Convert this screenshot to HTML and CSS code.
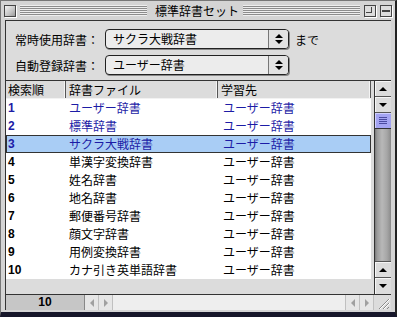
FILE: index.html
```html
<!DOCTYPE html>
<html lang="ja">
<head>
<meta charset="UTF-8">
<title>標準辞書セット</title>
<link rel="stylesheet" href="styles.css">
</head>
<body>
<div class="window">
    <div class="titlebar">
        <span class="closebox"></span>
        <span class="stripes stripes-left"></span>
        <span class="title">標準辞書セット</span>
        <span class="stripes stripes-right"></span>
        <span class="zoombox"><span></span></span>
        <span class="collapsebox"><span></span></span>
    </div>
    <div class="frame">
        <div class="content">
            <div class="settings">
                <div class="field">
                    <label>常時使用辞書：</label>
                    <div class="popup">
                        <span class="popup-value">サクラ大戦辞書</span>
                        <span class="popup-arrows"><i class="tri-up"></i><i class="tri-down"></i></span>
                    </div>
                    <span class="suffix">まで</span>
                </div>
                <div class="field">
                    <label>自動登録辞書：</label>
                    <div class="popup">
                        <span class="popup-value">ユーザー辞書</span>
                        <span class="popup-arrows"><i class="tri-up"></i><i class="tri-down"></i></span>
                    </div>
                </div>
            </div>
            <div class="listarea">
                <div class="list">
                    <div class="list-head">
                        <span>検索順</span>
                        <span>辞書ファイル</span>
                        <span>学習先</span>
                    </div>
                    <div class="rows">
                        <div class="row blue"><b>1</b><span>ユーザー辞書</span><span>ユーザー辞書</span></div>
                        <div class="row blue"><b>2</b><span>標準辞書</span><span>ユーザー辞書</span></div>
                        <div class="row blue selected"><b>3</b><span>サクラ大戦辞書</span><span>ユーザー辞書</span></div>
                        <div class="row"><b>4</b><span>単漢字変換辞書</span><span>ユーザー辞書</span></div>
                        <div class="row"><b>5</b><span>姓名辞書</span><span>ユーザー辞書</span></div>
                        <div class="row"><b>6</b><span>地名辞書</span><span>ユーザー辞書</span></div>
                        <div class="row"><b>7</b><span>郵便番号辞書</span><span>ユーザー辞書</span></div>
                        <div class="row"><b>8</b><span>顔文字辞書</span><span>ユーザー辞書</span></div>
                        <div class="row"><b>9</b><span>用例変換辞書</span><span>ユーザー辞書</span></div>
                        <div class="row"><b>10</b><span>カナ引き英単語辞書</span><span>ユーザー辞書</span></div>
                    </div>
                </div>
                <div class="vscroll">
                    <span class="arrow"><i class="tri-up"></i></span>
                    <span class="arrow"><i class="tri-down"></i></span>
                    <span class="thumb"><i></i></span>
                    <span class="track"></span>
                    <span class="arrow"><i class="tri-up"></i></span>
                    <span class="arrow last"><i class="tri-down"></i></span>
                </div>
            </div>
            <div class="hscroll">
                <span class="count">10</span>
                <span class="harrow"><i class="tri-left"></i></span>
                <span class="harrow"><i class="tri-right"></i></span>
                <span class="htrack"></span>
                <span class="harrow"><i class="tri-left"></i></span>
                <span class="harrow"><i class="tri-right"></i></span>
                <span class="growbox">
                    <svg width="16" height="15" viewBox="0 0 16 15">
                        <path d="M4 14 L14 4 M8 14 L14 8 M12 14 L14 12" stroke="#8a8a8a" stroke-width="1" fill="none"/>
                        <path d="M5 14 L15 4 M9 14 L15 8" stroke="#fff" stroke-width="1" fill="none"/>
                    </svg>
                </span>
            </div>
        </div>
    </div>
</div>
</body>
</html>
```

FILE: styles.css
```css
* {
    box-sizing: border-box;
    margin: 0;
    padding: 0;
}
body {
    width: 397px;
    height: 317px;
    overflow: hidden;
    background: #16162a;
    font-family: "Noto Sans CJK JP", sans-serif;
    font-size: 12px;
    color: #000;
}
.window {
    width: 397px;
    height: 317px;
    display: flex;
    flex-direction: column;
    background: #d4d4d4;
    border-top: 1px solid #777;
    border-left: 1px solid #777;
    border-right: 2px solid #222;
    border-bottom: 5px solid #16162a;
}

/* title bar */
.titlebar {
    height: 19px;
    display: flex;
    align-items: center;
    padding: 0 3px 0 3px;
}
.closebox, .zoombox, .collapsebox {
    width: 12px;
    height: 12px;
    border: 1px solid #444;
    background: linear-gradient(135deg, #f4f4f4 0%, #c4c4c4 60%, #999 100%);
    box-shadow: 1px 1px 0 #fff;
    flex: none;
}
.zoombox {
    margin-left: 4px;
    position: relative;
    background: #ddd;
}
.zoombox span {
    position: absolute;
    left: 1px;
    top: 1px;
    width: 6px;
    height: 6px;
    border-right: 1px solid #444;
    border-bottom: 1px solid #444;
}
.collapsebox {
    margin-left: 4px;
    position: relative;
    background: #ddd;
}
.collapsebox span {
    position: absolute;
    left: 1px;
    right: 1px;
    top: 4px;
    height: 2px;
    border-top: 1px solid #444;
    border-bottom: 1px solid #444;
}
.stripes {
    height: 11px;
    background: repeating-linear-gradient(to bottom, #eee 0, #eee 1px, #8c8c8c 1px, #8c8c8c 2px);
}
.stripes-left {
    flex: 1;
    margin: 0 4px 0 4px;
}
.stripes-right {
    width: 117px;
}
.title {
    padding: 0 4px;
    line-height: 19px;
    white-space: nowrap;
}

/* window body */
.frame {
    flex: 1;
    display: flex;
    padding: 0 4px 2px 4px;
}
.content {
    flex: 1;
    display: flex;
    flex-direction: column;
    background: #dcdcdc;
    border-top: 1px solid #333;
    border-left: 1px solid #333;
}
.settings {
    display: flex;
    flex-direction: column;
    gap: 6px;
    padding: 8px 0 5px 9px;
}
.field {
    display: flex;
    align-items: center;
    height: 20px;
}
.field label {
    width: 90px;
    white-space: nowrap;
}
.popup {
    width: 184px;
    height: 20px;
    display: flex;
    border: 1px solid #222;
    border-radius: 4px;
    background: #ececec;
    box-shadow: 1px 1px 0 #888;
}
.popup-value {
    flex: 1;
    padding-left: 7px;
    line-height: 18px;
}
.popup-arrows {
    width: 20px;
    border-left: 1px solid #777;
    border-radius: 0 3px 3px 0;
    background: #e2e2e2;
    display: flex;
    flex-direction: column;
    align-items: center;
    justify-content: center;
    gap: 2px;
}
.suffix {
    margin-left: 6px;
}

/* arrows */
.tri-up, .tri-down, .tri-left, .tri-right {
    display: block;
    width: 0;
    height: 0;
}
.tri-up {
    border-left: 4px solid transparent;
    border-right: 4px solid transparent;
    border-bottom: 4px solid #000;
}
.tri-down {
    border-left: 4px solid transparent;
    border-right: 4px solid transparent;
    border-top: 4px solid #000;
}
.tri-left {
    border-top: 4px solid transparent;
    border-bottom: 4px solid transparent;
    border-right: 4px solid #a0a0a0;
}
.tri-right {
    border-top: 4px solid transparent;
    border-bottom: 4px solid transparent;
    border-left: 4px solid #a0a0a0;
}

/* list */
.listarea {
    flex: 1;
    display: flex;
    border-top: 1px solid #333;
}
.list {
    flex: 1;
    padding-right: 3px;
    background: #dcdcdc;
}
.list-head, .row {
    display: grid;
    grid-template-columns: 60px 152px 1fr;
}
.list-head {
    height: 18px;
    border-bottom: 1px solid #f2f2f2;
    background: #dcdcdc;
}
.list-head span {
    line-height: 17px;
    padding-left: 2px;
    border-right: 1px solid #555;
    box-shadow: inset -1px 0 0 #f4f4f4;
}
.list-head span + span {
    padding-left: 3px;
}
.rows {
    background: #fff;
}
.row {
    height: 18px;
    line-height: 18px;
}
.row b {
    font-family: "Liberation Sans", Arial, sans-serif;
    font-size: 12px;
    padding-left: 2px;
}
.row span {
    padding-left: 3px;
}
.row span + span {
    padding-left: 5px;
}
.blue {
    color: #1c1ca6;
}
.selected {
    background: #a9cdf5;
    box-shadow: inset 0 0 0 1px #333;
}

/* vertical scroll bar */
.vscroll {
    width: 17px;
    display: flex;
    flex-direction: column;
    border-left: 1px solid #333;
}
.arrow {
    height: 16px;
    display: flex;
    align-items: center;
    justify-content: center;
    background: #dcdcdc;
    border-bottom: 1px solid #555;
    box-shadow: inset 1px 1px 0 #f6f6f6;
}
.arrow.last {
    border-bottom: none;
}
.thumb {
    height: 16px;
    display: flex;
    align-items: center;
    justify-content: center;
    background: #a4a4f2;
    border-bottom: 1px solid #333;
    box-shadow: inset 1px 1px 0 #d0d0ff;
}
.thumb i {
    width: 8px;
    height: 7px;
    background: repeating-linear-gradient(to bottom, #4a4aa0 0, #4a4aa0 1px, transparent 1px, transparent 2px);
}
.track {
    flex: 1;
    background: linear-gradient(to right, #7a7a7a 0, #9a9a9a 2px, #b8b8b8 7px, #a6a6a6 12px, #8a8a8a 16px);
    border-bottom: 1px solid #555;
}

/* horizontal bar */
.hscroll {
    height: 16px;
    display: flex;
    border-top: 1px solid #333;
    background: #eeeeee;
}
.count {
    width: 79px;
    background: #c6c6c6;
    border-right: 1px solid #888;
    font-family: "Liberation Sans", Arial, sans-serif;
    font-weight: bold;
    font-size: 12px;
    line-height: 15px;
    text-align: center;
}
.harrow {
    width: 14px;
    display: flex;
    align-items: center;
    justify-content: center;
    background: #e6e6e6;
    border-right: 1px solid #c0c0c0;
}
.htrack {
    flex: 1;
    border-right: 1px solid #c0c0c0;
}
.growbox {
    width: 17px;
    display: flex;
    align-items: flex-end;
    justify-content: flex-end;
    background: #dcdcdc;
}
```
